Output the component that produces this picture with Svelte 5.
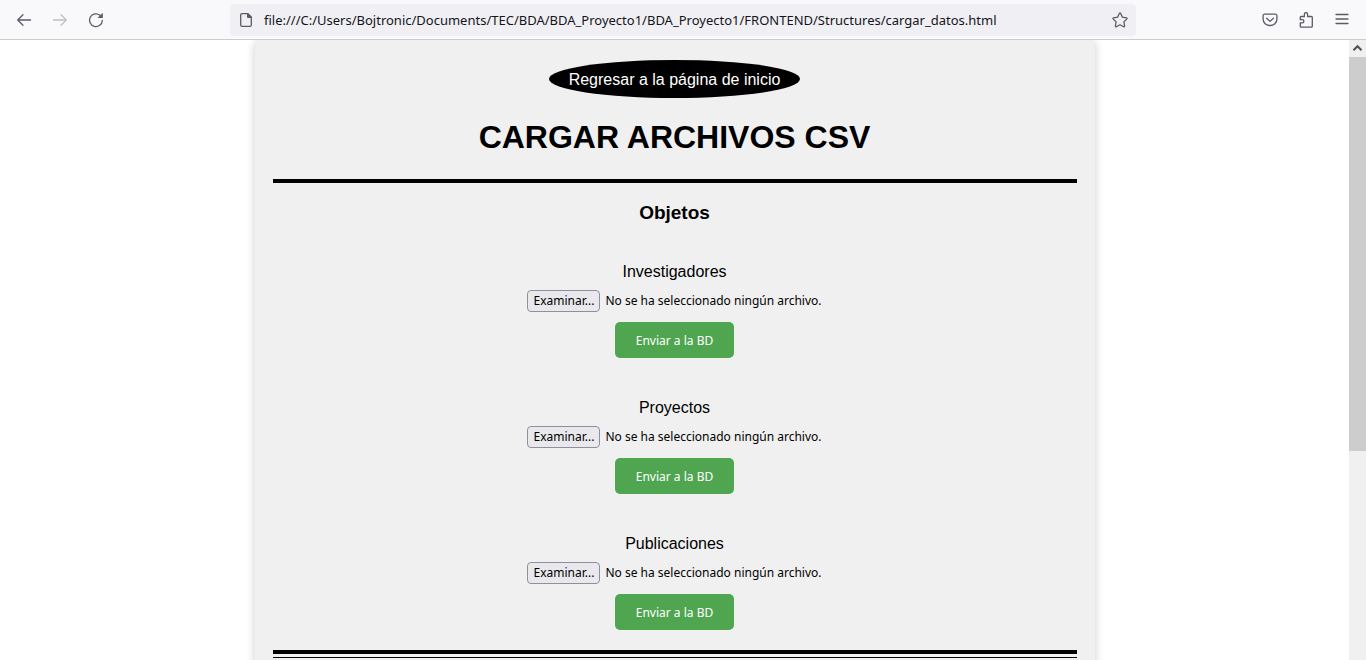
<script>
  const groups = ['Investigadores', 'Proyectos', 'Publicaciones'];
  const url =
    'file:///C:/Users/Bojtronic/Documents/TEC/BDA/BDA_Proyecto1/BDA_Proyecto1/FRONTEND/Structures/cargar_datos.html';

  let inputs = $state([]);
  let names = $state(groups.map(() => ''));

  function picked(i, event) {
    names[i] = event.currentTarget.files[0]?.name ?? '';
  }
</script>

<div class="window">
  <header class="toolbar">
    <nav class="nav" aria-label="Navegación">
      <button class="icon" aria-label="Atrás">
        <svg viewBox="0 0 16 16"><path d="M14.5 8H1.7M7 2.7L1.7 8 7 13.3" /></svg>
      </button>
      <button class="icon" aria-label="Adelante" disabled>
        <svg viewBox="0 0 16 16"><path d="M1.5 8h12.8M9 2.7L14.3 8 9 13.3" /></svg>
      </button>
      <button class="icon" aria-label="Recargar">
        <svg viewBox="0 0 16 16"><path d="M14.3 8.4A6.4 6.4 0 1 1 12 3.3" /><path class="solid" d="M14.8 .8v5.3H9.5z" /></svg>
      </button>
    </nav>

    <div class="address">
      <svg class="page-icon" viewBox="0 0 16 16" aria-hidden="true">
        <path d="M9.8 1.7H4A1.3 1.3 0 0 0 2.7 3v10A1.3 1.3 0 0 0 4 14.3h8a1.3 1.3 0 0 0 1.3-1.3V5.2z" />
        <path class="solid" d="M9 1.2h1.2L13.8 4.8V6H10a1 1 0 0 1-1-1z" />
      </svg>
      <input type="text" aria-label="Dirección" value={url} />
      <button class="icon" aria-label="Añadir a marcadores">
        <svg viewBox="0 0 16 16"><path d="M7.4 1.3a.7.7 0 0 1 1.2 0l1.8 3.9 4.1.6a.7.7 0 0 1 .4 1.1l-3 3 .7 4.2a.7.7 0 0 1-1 .7L8 12.8l-3.6 2a.7.7 0 0 1-1-.7l.7-4.2-3-3a.7.7 0 0 1 .4-1.1l4.1-.6z" /></svg>
      </button>
    </div>

    <div class="tools">
      <button class="icon" aria-label="Guardar en Pocket">
        <svg viewBox="0 0 16 16"><path d="M2.5 2.2h11a1.4 1.4 0 0 1 1.4 1.4v3.7a6.9 6.2 0 0 1-13.8 0V3.6a1.4 1.4 0 0 1 1.4-1.4z" /><path d="M4.6 6.2L8 9.4l3.4-3.2" /></svg>
      </button>
      <button class="icon" aria-label="Extensiones">
        <svg viewBox="0 0 16 16"><path d="M3.2 4.5h3.2V2.2a1.6 1.6 0 0 1 3.2 0v2.3h3.8a.9.9 0 0 1 .9.9v8.8a.9.9 0 0 1-.9.9H3.2a.9.9 0 0 1-.9-.9v-3.3h2a1.6 1.6 0 0 0 0-3.2h-2V5.4a.9.9 0 0 1 .9-.9z" /></svg>
      </button>
      <button class="icon" aria-label="Menú">
        <svg viewBox="0 0 16 16"><path d="M2 2.5h12M2 7h12M2 11.5h12" /></svg>
      </button>
    </div>
  </header>

  <div class="viewport">
    <main class="page">
      <div class="card">
        <a class="home" href="#inicio">Regresar a la página de inicio</a>
        <h1>CARGAR ARCHIVOS CSV</h1>

        <section>
          <h2>Objetos</h2>
          {#each groups as group, i}
            <form class="group" onsubmit={(e) => e.preventDefault()}>
              <label for="file-{i}">{group}</label>
              <div class="picker">
                <input
                  class="file"
                  id="file-{i}"
                  type="file"
                  accept=".csv"
                  tabindex="-1"
                  bind:this={inputs[i]}
                  onchange={(e) => picked(i, e)}
                />
                <button type="button" class="browse" onclick={() => inputs[i].click()}>Examinar...</button>
                <span>{names[i] || 'No se ha seleccionado ningún archivo.'}</span>
              </div>
              <button class="send">Enviar a la BD</button>
            </form>
          {/each}
        </section>
        <section class="next"></section>
      </div>
    </main>

    <div class="scrollbar" aria-hidden="true">
      <svg class="arrow" viewBox="0 0 17 17"><path d="M4.5 10.2l4-4 4 4" /></svg>
      <div class="track"><div class="thumb"></div></div>
    </div>
  </div>
</div>

<style>
  :global(body) {
    margin: 0;
  }

  .window {
    display: flex;
    flex-direction: column;
    height: 100vh;
    background: #fff;
    color: #000;
    font-family: "Liberation Sans", Arial, sans-serif;
    font-size: 16px;
    line-height: 18px;
  }

  .toolbar {
    display: flex;
    align-items: center;
    justify-content: space-between;
    flex: none;
    height: 39px;
    padding: 0 16px;
    background: #f9f9fb;
    border-bottom: 1px solid #ccc;
  }

  .nav,
  .tools {
    display: flex;
    gap: 20px;
  }

  .nav {
    width: 214px;
  }

  .tools {
    width: 214px;
    justify-content: flex-end;
  }

  .icon {
    display: block;
    flex: none;
    width: 16px;
    height: 16px;
    padding: 0;
    border: 0;
    background: none;
    color: #5b5b66;
  }

  .icon:disabled {
    color: #c0c0c5;
  }

  svg {
    display: block;
    width: 16px;
    height: 16px;
    fill: none;
    stroke: currentColor;
    stroke-width: 1.3;
    stroke-linecap: round;
    stroke-linejoin: round;
  }

  .solid {
    fill: currentColor;
    stroke: none;
  }

  .address {
    display: flex;
    align-items: center;
    flex: 0 1 906px;
    box-sizing: border-box;
    height: 32px;
    padding: 0 8px;
    border-radius: 4px;
    background: #f0f0f4;
    color: #5b5b66;
  }

  .page-icon {
    flex: none;
  }

  .address input {
    flex: 1;
    min-width: 0;
    height: 24px;
    margin: 0 10px;
    padding: 0;
    border: 0;
    outline: 0;
    background: none;
    color: #15141a;
    font-family: "Noto Sans", sans-serif;
    font-size: 13px;
  }

  .viewport {
    display: flex;
    flex: 1;
    min-height: 0;
  }

  .page {
    flex: 1;
    min-width: 0;
    overflow: hidden;
  }

  .card {
    box-sizing: border-box;
    max-width: 840px;
    min-height: 100%;
    margin: 0 auto;
    padding: 20px 18px;
    border-radius: 8px;
    background: #f0f0f0;
    box-shadow: 0 0 10px rgba(0, 0, 0, 0.2);
    text-align: center;
  }

  .home {
    display: block;
    width: fit-content;
    margin: 0 auto;
    padding: 11px 20px 9px;
    border-radius: 50%;
    background: #000;
    color: #fff;
    text-decoration: none;
  }

  h1 {
    margin: 21px 0 23px;
    font-size: 32px;
    line-height: 37px;
  }

  section {
    padding: 21px 0 20px;
    border-top: 4px solid #000;
    border-bottom: 4px solid #000;
  }

  h2 {
    margin: 0;
    font-size: 19px;
    line-height: 18px;
  }

  .group {
    display: flex;
    flex-direction: column;
    align-items: center;
    margin-top: 41px;
  }

  .picker {
    display: flex;
    align-items: center;
    gap: 5px;
    margin: 9px 0 10px;
    font-family: "Noto Sans", sans-serif;
    font-size: 12px;
  }

  .file {
    position: absolute;
    width: 1px;
    height: 1px;
    opacity: 0;
    pointer-events: none;
  }

  .browse {
    box-sizing: border-box;
    height: 22px;
    padding: 0 5px;
    border: 1px solid #8f8f9d;
    border-radius: 4px;
    background: #e9e9ed;
    color: #000;
    font: inherit;
  }

  .send {
    height: 36px;
    padding: 0 21px;
    border: 0;
    border-radius: 5px;
    background: #50a650;
    color: #fff;
    font-family: "Noto Sans", sans-serif;
    font-size: 12px;
  }

  .next {
    margin-top: 3px;
    border-top-width: 1px;
    border-bottom: 0;
  }

  .scrollbar {
    display: flex;
    flex-direction: column;
    flex: none;
    width: 17px;
    background: #f0f0f0;
  }

  .arrow {
    flex: none;
    width: 17px;
    height: 17px;
    color: #505050;
    stroke-width: 2;
    stroke-linecap: butt;
    stroke-linejoin: miter;
  }

  .track {
    flex: 1;
  }

  .thumb {
    height: 65.3%;
    background: #cdcdcd;
  }
</style>
